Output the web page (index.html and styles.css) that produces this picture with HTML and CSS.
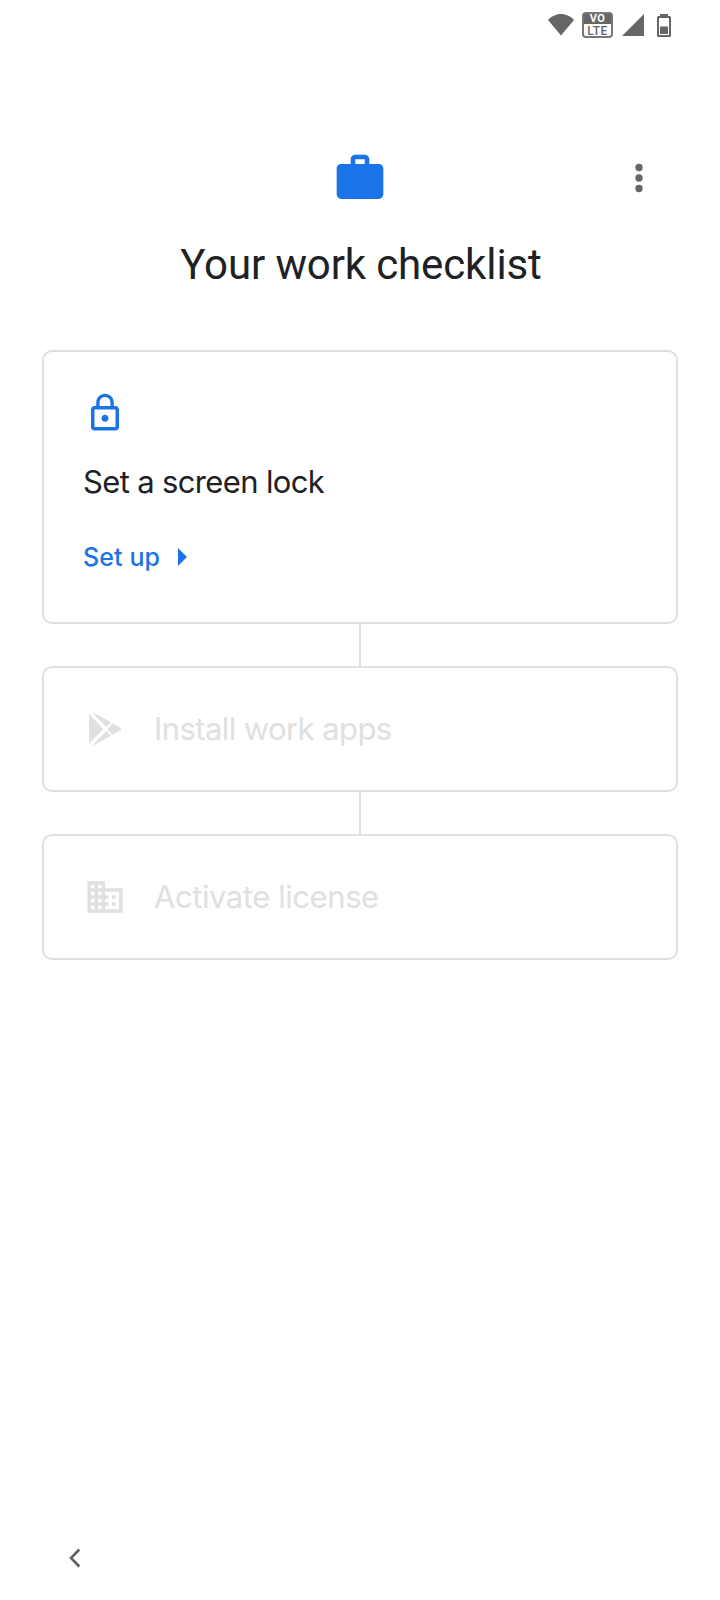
FILE: index.html
```html
<!DOCTYPE html>
<html lang="en">
<head>
<meta charset="utf-8">
<title>Your work checklist</title>
<link rel="stylesheet" href="styles.css">
</head>
<body>
<div class="screen">
  <div class="status">
    <svg class="wifi" width="28" height="24" viewBox="0 0 28 24"><path d="M14 23.500L1 8.100C4.200 4.400 9 2 14 2s9.800 2.400 13 6.100z"/></svg>
    <div class="volte"><span class="vo">VO</span><span class="lte">LTE</span></div>
    <svg class="signal" width="22" height="22" viewBox="0 0 22 22"><path d="M22 0v22H0z"/></svg>
    <svg class="battery" width="14" height="23" viewBox="0 0 14 23"><path fill-rule="evenodd" d="M3 0h8v2h1.500q1.500 0 1.500 1.500V21.500q0 1.500-1.500 1.500h-11Q0 23 0 21.500V3.500Q0 2 1.500 2H3zM2 4v17h10V4z"/><path d="M3 12.500h8V20H3z"/></svg>
  </div>
  <header class="header">
    <svg class="work" width="56" height="56" viewBox="0 0 24 24"><path d="M20 6h-4V4c0-1.110-.89-2-2-2h-4c-1.110 0-2 .89-2 2v2H4c-1.110 0-2 .89-2 2v11c0 1.110.89 2 2 2h16c1.110 0 2-.89 2-2V8c0-1.110-.89-2-2-2zm-6 0h-4V4h4z"/></svg>
    <svg class="more" width="42" height="42" viewBox="0 0 24 24"><circle cx="12" cy="6" r="2.100"/><circle cx="12" cy="12" r="2.100"/><circle cx="12" cy="18" r="2.100"/></svg>
  </header>
  <h1 class="title">Your work checklist</h1>
  <main class="steps">
    <section class="card active">
      <svg class="icon" width="42" height="42" viewBox="0 0 24 24"><path d="M12 17c1.100 0 2-.9 2-2s-.9-2-2-2-2 .9-2 2 .9 2 2 2zm6-9h-1V6c0-2.760-2.240-5-5-5S7 3.240 7 6v2H6c-1.100 0-2 .9-2 2v10c0 1.100.9 2 2 2h12c1.100 0 2-.9 2-2V10c0-1.100-.9-2-2-2zM8.900 6c0-1.710 1.390-3.100 3.100-3.100s3.100 1.390 3.100 3.100v2H8.900V6zM18 20H6V10h12v10z"/></svg>
      <h2 class="name lock">Set a screen lock</h2>
      <a class="setup"><span>Set up</span><svg width="9" height="18" viewBox="0 0 9 18"><path d="M0 0l9 9-9 9z"/></svg></a>
    </section>
    <div class="link"></div>
    <section class="card pending">
      <svg class="icon" width="42" height="42" viewBox="0 0 42 42"><path d="M5 5.800L19.300 21 5 35.800zM7.700 3.800L27 14.300l-4.700 4.800zM7.700 38.200L22.300 22.900l4.700 4.800zM28.400 15.200l8 4.500q1.700 1.300 0 2.600l-8 4.500-5-5.800z"/></svg>
      <h2 class="name install">Install work apps</h2>
    </section>
    <div class="link"></div>
    <section class="card pending">
      <svg class="icon" width="42" height="42" viewBox="0 0 24 24"><path d="M12 7V3H2v18h20V7H12zM6 19H4v-2h2v2zm0-4H4v-2h2v2zm0-4H4V9h2v2zm0-4H4V5h2v2zm4 12H8v-2h2v2zm0-4H8v-2h2v2zm0-4H8V9h2v2zm0-4H8V5h2v2zm10 12h-8v-2h2v-2h-2v-2h2v-2h-2V9h8v10zm-2-8h-2v2h2v-2zm0 4h-2v2h2v-2z"/></svg>
      <h2 class="name license">Activate license</h2>
    </section>
  </main>
  <nav class="nav"><svg width="12" height="20" viewBox="0 0 12 20"><path d="M10.300 1.500L2 10l8.300 8.500" fill="none" stroke="#5f5f5f" stroke-width="2.600"/></svg></nav>
</div>
</body>
</html>
```
FILE: styles.css
```css
* { box-sizing: border-box; }
body { margin: 0; background: #fff; font-family: Inter, "Liberation Sans", sans-serif; }
svg { display: block; fill: currentColor; flex: none; }
h1, h2 { margin: 0; font-weight: 400; }
.screen { width: 720px; height: 1600px; display: flex; flex-direction: column; }
.status { height: 50px; display: flex; justify-content: flex-end; align-items: flex-start; padding: 12px 49px 0 0; color: #666; }
.wifi { margin-right: 7px; }
.volte { width: 31px; height: 26px; margin-right: 9px; border: 2px solid #777; border-radius: 4px; display: flex; flex-direction: column; text-align: center; font-family: Roboto, sans-serif; font-size: 11px; }
.vo { height: 10px; line-height: 10px; background: #666; color: #fff; font-weight: 700; letter-spacing: .5px; }
.lte { height: 12px; line-height: 14px; font-weight: 500; letter-spacing: .5px; font-size: 12px; }
.signal { margin: 2px 13px 0 0; }
.battery { margin-top: 2px; }
.header { height: 156px; padding: 100px 60px 0; display: grid; grid-template-columns: 1fr 56px 1fr; }
.work { grid-column: 2; color: #1a73e8; }
.more { justify-self: end; margin-top: 7px; color: #666; }
.title { height: 144px; padding: 34px 0 0 2px; text-align: center; font: 400 42px/50px Roboto, sans-serif; color: #202124; letter-spacing: -.12px; white-space: nowrap; }
.steps { margin: 0 42px; display: flex; flex-direction: column; align-items: stretch; }
.card { border: 2px solid #e0e0e0; border-radius: 10px; padding: 40px; }
.active { height: 274px; color: #1a73e8; }
.pending { height: 126px; display: flex; align-items: center; gap: 28px; color: #e0e0e0; }
.name { font-size: 31px; line-height: 40px; white-space: nowrap; }
.lock { margin: 28px 0 0 -1px; color: #202124; letter-spacing: -.65px; }
.install { letter-spacing: -.58px; }
.license { letter-spacing: -.43px; }
.setup { height: 30px; margin: 40px 0 0 -1px; display: flex; align-items: center; gap: 18px; font-size: 25px; line-height: 30px; font-weight: 500; letter-spacing: .1px; }
.link { width: 2px; height: 42px; background: #e0e0e0; align-self: center; }
.nav { margin-top: auto; padding: 0 0 32px 69px; }
```
